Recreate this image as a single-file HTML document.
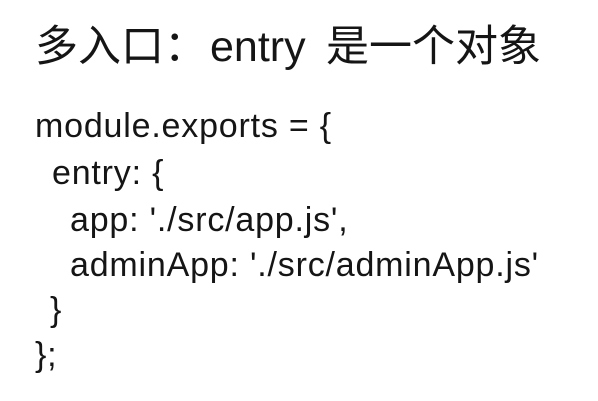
<!DOCTYPE html>
<html><head><meta charset="utf-8"><style>
html,body{margin:0;padding:0;background:#fff;width:598px;height:401px;overflow:hidden}
.t{position:absolute;font-family:"Liberation Sans","Noto Sans CJK SC",sans-serif;color:#151515;white-space:pre;line-height:1}
.title{font-size:43px;top:26px}
.c{font-size:34px;letter-spacing:0.8px}
</style></head><body>
<div class="t title" style="left:35px">多入口：</div>
<div class="t title" style="left:210px">entry</div>
<div class="t title" style="left:326px">是一个对象</div>
<div class="t c" style="left:35px;top:109px">module.exports = {</div>
<div class="t c" style="left:52px;top:156px">entry: {</div>
<div class="t c" style="left:70px;top:203px">app: './src/app.js',</div>
<div class="t c" style="left:70px;top:248px">adminApp: './src/adminApp.js'</div>
<div class="t c" style="left:50px;top:293px">}</div>
<div class="t c" style="left:35px;top:338px">};</div>
</body></html>
